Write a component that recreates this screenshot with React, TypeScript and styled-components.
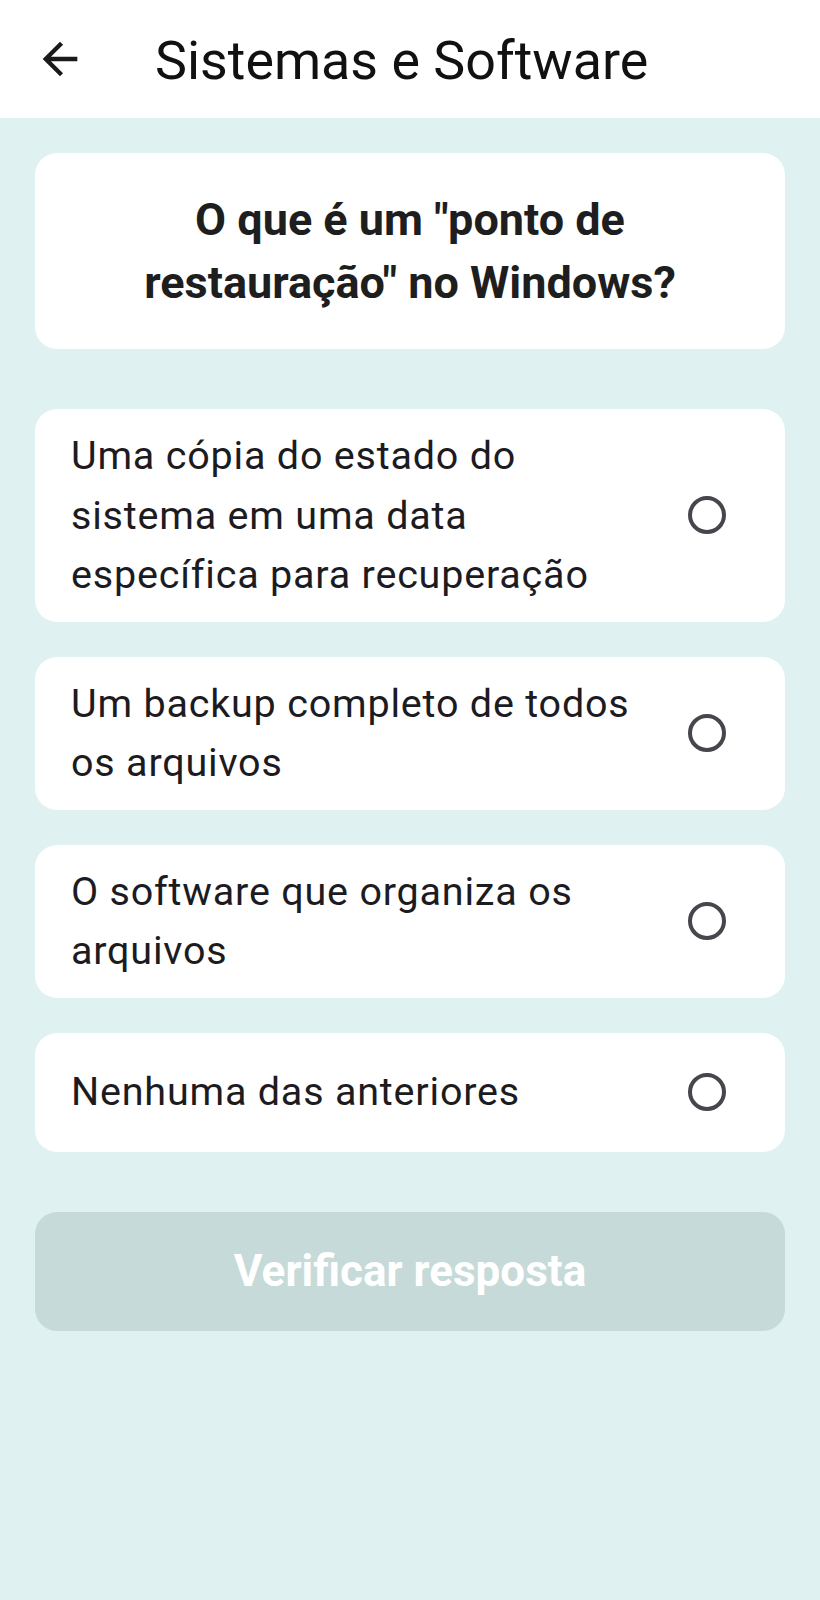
import React from "react";
import styled, { createGlobalStyle } from "styled-components";

const GlobalStyle = createGlobalStyle`
  html, body {
    margin: 0;
    padding: 0;
    background: #dff1f0;
  }
  body {
    font-family: Roboto, "Noto Sans", "Liberation Sans", sans-serif;
    -webkit-font-smoothing: antialiased;
  }
  * { box-sizing: border-box; }
`;

const Page = styled.div`
  min-height: 1600px;
  display: flex;
  flex-direction: column;
  background: #dff1f0;
`;

const Header = styled.header`
  height: 118px;
  background: #ffffff;
  display: flex;
  align-items: center;
  padding-left: 34px;
`;

const BackButton = styled.button`
  width: 52px;
  height: 52px;
  padding: 0;
  border: none;
  background: transparent;
  display: flex;
  align-items: center;
  justify-content: center;
  color: #1a1a1a;
  cursor: pointer;
`;

const Title = styled.h1`
  margin: 2px 0 0 69px;
  font-family: Roboto, "Noto Sans", sans-serif;
  font-weight: 400;
  font-size: 53.8px;
  color: #111111;
  letter-spacing: 0;
`;

const Main = styled.main`
  display: flex;
  flex-direction: column;
  padding: 35px 35px;
`;

const QuestionCard = styled.section`
  background: #ffffff;
  border-radius: 22px;
  padding: 35px 36px;
  text-align: center;
  font-family: Roboto, "Noto Sans", sans-serif;
  font-weight: 700;
  font-size: 45px;
  line-height: 63px;
  color: #1e1e1e;
`;

const Options = styled.div`
  display: flex;
  flex-direction: column;
  gap: 35px;
  margin-top: 60px;
`;

const OptionCard = styled.label`
  background: #ffffff;
  border-radius: 22px;
  padding: 17px 36px;
  display: flex;
  align-items: center;
  cursor: pointer;
`;

const OptionText = styled.span`
  flex: 1;
  font-family: Roboto, "Noto Sans", sans-serif;
  font-weight: 400;
  font-size: 39.5px;
  letter-spacing: 0.8px;
  line-height: 59.5px;
  color: #1c1b1f;
`;

const RadioBox = styled.span`
  width: 85px;
  height: 85px;
  flex: none;
  display: flex;
  align-items: center;
  justify-content: center;
`;

const RadioCircle = styled.span`
  width: 38px;
  height: 38px;
  border-radius: 50%;
  border: 4px solid #48464c;
`;

const VerifyButton = styled.button`
  margin-top: 60px;
  height: 119px;
  border: none;
  border-radius: 22px;
  background: #c6dad9;
  color: #ffffff;
  font-family: Roboto, "Noto Sans", sans-serif;
  font-weight: 700;
  font-size: 44px;
  cursor: default;
`;

const options = [
  "Uma cópia do estado do sistema em uma data específica para recuperação",
  "Um backup completo de todos os arquivos",
  "O software que organiza os arquivos",
  "Nenhuma das anteriores",
];

export default function App() {
  return (
    <>
      <GlobalStyle />
      <Page>
        <Header>
          <BackButton aria-label="Voltar">
            <svg width="52" height="52" viewBox="0 0 24 24" fill="currentColor">
              <path d="M20 11H7.83l5.59-5.59L12 4l-8 8 8 8 1.41-1.41L7.83 13H20v-2z" />
            </svg>
          </BackButton>
          <Title>Sistemas e Software</Title>
        </Header>
        <Main>
          <QuestionCard>O que é um "ponto de restauração" no Windows?</QuestionCard>
          <Options>
            {options.map((o) => (
              <OptionCard key={o}>
                <OptionText>{o}</OptionText>
                <RadioBox>
                  <RadioCircle />
                </RadioBox>
              </OptionCard>
            ))}
          </Options>
          <VerifyButton disabled>Verificar resposta</VerifyButton>
        </Main>
      </Page>
    </>
  );
}
